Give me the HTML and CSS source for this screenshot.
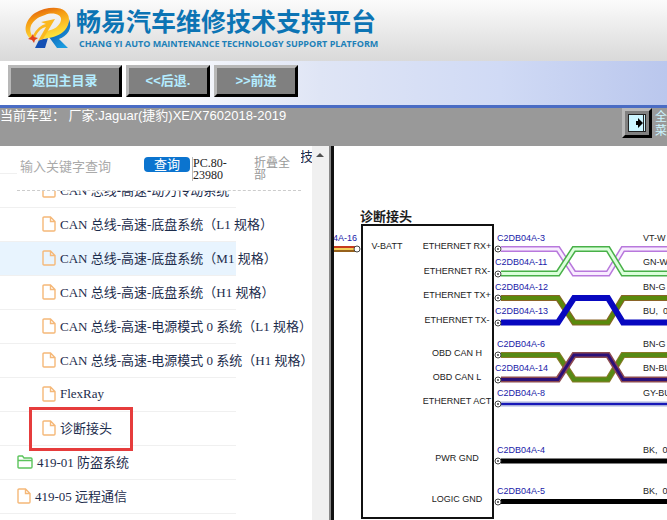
FILE: index.html
```
<!DOCTYPE html>
<html lang="zh-CN">
<head>
    <meta charset="UTF-8">
    <meta name="viewport" content="width=device-width, initial-scale=1.0">
    <title>畅易汽车维修技术支持平台</title>
    <link rel="stylesheet" href="styles.css">
</head>
<body>
    <header class="banner">
        <svg class="logo" width="46" height="42" viewBox="0 0 46 42">
            <defs>
                <linearGradient id="swoosh" x1="0" y1="0" x2="0.4" y2="1">
                    <stop offset="0" stop-color="#d9480f"/>
                    <stop offset="0.4" stop-color="#f59a12"/>
                    <stop offset="1" stop-color="#ffe23a"/>
                </linearGradient>
                <linearGradient id="leg" x1="0" y1="0" x2="0.6" y2="1">
                    <stop offset="0" stop-color="#0b3f9c"/>
                    <stop offset="1" stop-color="#1a9ce0"/>
                </linearGradient>
            </defs>
            <path d="M14 33 L23 31 L20 41 L10 41 Z" fill="#1450b4"/>
            <path d="M24 30 C36 28 43 21 44 12 C48 22 42 29 34 32 L43 41 L32 41 Z" fill="url(#leg)"/>
            <path d="M6 32 C-3 25 0 13 10 6 C20 0 34 -1 40 4 C47 10 44 20 38 25 C33 29 26 31 17 32 L21 24 C29 23 35 19 36 13 C37 7 27 5 20 8 C9 11 1 20 8 30 Z" fill="url(#swoosh)"/>
            <path d="M8 29 C11 22 16 18 21 17 L16 15 L30 12 L18 32 L13 34 L21 20 C16 21 12 25 10 31 Z" fill="#fbb81e"/>
            <path d="M8 27 L9 30 L13 31 L10 33 L9 36 L7 33 L3 32 L6 30 Z" fill="#e2431e"/>
        </svg>
        <div class="brand">
            <h1 class="brand-name">畅易汽车维修技术支持平台</h1>
            <div class="brand-sub">CHANG YI AUTO MAINTENANCE TECHNOLOGY SUPPORT PLATFORM</div>
        </div>
    </header>

    <nav class="toolbar">
        <button class="btn btn-wide" type="button">返回主目录</button>
        <button class="btn" type="button">&lt;&lt;后退.</button>
        <button class="btn" type="button">&gt;&gt;前进</button>
    </nav>

    <div class="infobar">
        <div class="model">当前车型： 厂家:Jaguar(捷豹)XE/X7602018-2019</div>
        <button class="btn-menu" type="button" id="menuBtn" aria-labelledby="menuText">
            <svg width="18" height="18" viewBox="0 0 18 18">
                <rect x="0.5" y="0.5" width="17" height="17" fill="#ccf5ff" stroke="#222"/>
                <path d="M15.5 1 V17" stroke="#222"/>
                <path d="M8 7 H10 V4 L15 9 L10 14 V11 H8 Z" fill="#000"/>
            </svg>
        </button>
        <label class="menu-text" id="menuText" for="menuBtn">全菜</label>
    </div>

    <div class="main">
        <aside class="sidebar">
            <form class="search">
                <input class="search-input" type="text" placeholder="输入关键字查询" aria-label="输入关键字查询">
                <button class="btn-search" type="button">查询</button>
                <span class="version">PC.80-23980</span>
                <a class="collapse" href="#">折叠全部</a>
            </form>
            <ul class="tree">
                <li class="node node-first">技</li>
                <li class="node level-3"><svg class="icon"><use href="#file"/></svg>CAN 总线-高速-动力传动系统</li>
                <li class="node level-3"><svg class="icon"><use href="#file"/></svg>CAN 总线-高速-底盘系统（L1 规格）</li>
                <li class="node level-3 active"><svg class="icon"><use href="#file"/></svg>CAN 总线-高速-底盘系统（M1 规格）</li>
                <li class="node level-3"><svg class="icon"><use href="#file"/></svg>CAN 总线-高速-底盘系统（H1 规格）</li>
                <li class="node level-3"><svg class="icon"><use href="#file"/></svg>CAN 总线-高速-电源模式 0 系统（L1 规格）</li>
                <li class="node level-3"><svg class="icon"><use href="#file"/></svg>CAN 总线-高速-电源模式 0 系统（H1 规格）</li>
                <li class="node level-3"><svg class="icon"><use href="#file"/></svg>FlexRay</li>
                <li class="node level-3 marked"><svg class="icon"><use href="#file"/></svg>诊断接头</li>
                <li class="node level-2"><svg class="icon icon-folder"><use href="#folder"/></svg>419-01 防盗系统</li>
                <li class="node level-2"><svg class="icon"><use href="#file"/></svg>419-05 远程通信</li>
            </ul>
        </aside>
        <div class="scrollbar"><span class="scroll-up"></span></div>

        <div class="diagram">
            <svg width="333" height="374" viewBox="334 146 333 374">
                <!-- battery feed -->
                <g fill="none">
                    <path d="M334 247 H355" stroke="#c63a1c" stroke-width="2"/>
                    <path d="M334 249 H355" stroke="#f3d05a" stroke-width="2"/>
                    <path d="M334 251 H355" stroke="#96611c" stroke-width="2"/>
                </g>

                <!-- connector -->
                <rect x="362" y="225" width="131" height="293" fill="#fff" stroke="#111" stroke-width="2"/>
                <text class="heading" x="360" y="221">诊断接头</text>

                <!-- twisted pairs -->
                <g fill="none">
                    <path d="M501 249 H558 L574 273.5 H608 L623 249 H667" stroke="#b878dc" stroke-width="6"/>
                    <path d="M501 249 H558 L574 273.5 H608 L623 249 H667" stroke="#f8ecff" stroke-width="3"/>
                    <path d="M501 273.5 H558 L574 249 H608 L623 273.5 H667" stroke="#48b048" stroke-width="6"/>
                    <path d="M501 273.5 H558 L574 249 H608 L623 273.5 H667" stroke="#dcffdc" stroke-width="3"/>

                    <path d="M501 298 H558 L574 322.5 H608 L623 298 H667" stroke="#8a6428" stroke-width="6"/>
                    <path d="M501 298 H558 L574 322.5 H608 L623 298 H667" stroke="#5a8a0c" stroke-width="4"/>
                    <path d="M501 322.5 H558 L574 298 H608 L623 322.5 H667" stroke="#0808c0" stroke-width="6"/>

                    <path d="M501 355 H558 L574 379.5 H608 L623 355 H667" stroke="#8a7a28" stroke-width="6"/>
                    <path d="M501 355 H558 L574 379.5 H608 L623 355 H667" stroke="#568a14" stroke-width="4"/>
                    <path d="M501 379.5 H558 L574 355 H608 L623 379.5 H667" stroke="#8c4a50" stroke-width="6"/>
                    <path d="M501 379.5 H558 L574 355 H608 L623 379.5 H667" stroke="#2c1078" stroke-width="3"/>

                    <path d="M501 404 H667" stroke="#a9b0dc" stroke-width="5"/>
                    <path d="M501 404 H667" stroke="#1818b8" stroke-width="2"/>
                    <path d="M501 461 H667 M501 501.5 H667" stroke="#000" stroke-width="5"/>
                </g>

                <g class="pins">
                    <circle cx="357" cy="249" r="3"/>
                    <circle cx="498" cy="249" r="3"/>
                    <circle cx="498" cy="274" r="3"/>
                    <circle cx="498" cy="298" r="3"/>
                    <circle cx="498" cy="323" r="3"/>
                    <circle cx="498" cy="355" r="3"/>
                    <circle cx="498" cy="380" r="3"/>
                    <circle cx="498" cy="404" r="3"/>
                    <circle cx="498" cy="461" r="3"/>
                    <circle cx="498" cy="502" r="3"/>
                </g>
                <g class="pin-dots">
                    <circle cx="498" cy="249" r="1"/>
                    <circle cx="498" cy="274" r="1"/>
                    <circle cx="498" cy="298" r="1"/>
                    <circle cx="498" cy="323" r="1"/>
                    <circle cx="498" cy="355" r="1"/>
                    <circle cx="498" cy="380" r="1"/>
                    <circle cx="498" cy="404" r="1"/>
                    <circle cx="498" cy="461" r="1"/>
                    <circle cx="498" cy="502" r="1"/>
                </g>

                <g class="signal">
                    <text x="387" y="249">V-BATT</text>
                    <text x="457" y="249">ETHERNET RX+</text>
                    <text x="457" y="274">ETHERNET RX-</text>
                    <text x="457" y="298">ETHERNET TX+</text>
                    <text x="457" y="323">ETHERNET TX-</text>
                    <text x="457" y="356">OBD CAN H</text>
                    <text x="457" y="380">OBD CAN L</text>
                    <text x="457" y="404">ETHERNET ACT</text>
                    <text x="457" y="461">PWR GND</text>
                    <text x="457" y="502">LOGIC GND</text>
                </g>

                <g class="pin-name">
                    <text x="333" y="241">4A-16</text>
                    <text x="497" y="241">C2DB04A-3</text>
                    <text x="495" y="265">C2DB04A-11</text>
                    <text x="495" y="290">C2DB04A-12</text>
                    <text x="495" y="314">C2DB04A-13</text>
                    <text x="497" y="347">C2DB04A-6</text>
                    <text x="495" y="371">C2DB04A-14</text>
                    <text x="497" y="396">C2DB04A-8</text>
                    <text x="497" y="453">C2DB04A-4</text>
                    <text x="497" y="494">C2DB04A-5</text>
                </g>

                <g class="wire-name">
                    <text x="643" y="241">VT-W</text>
                    <text x="643" y="265">GN-W</text>
                    <text x="643" y="290">BN-G</text>
                    <text x="643" y="314">BU,&#160; 0</text>
                    <text x="643" y="347">BN-G</text>
                    <text x="643" y="371">BN-BU</text>
                    <text x="643" y="396">GY-BU</text>
                    <text x="643" y="453">BK,&#160; 0</text>
                    <text x="643" y="494">BK,&#160; 0</text>
                </g>
            </svg>
        </div>
    </div>

    <svg class="sprite">
        <symbol id="file" viewBox="0 0 14 16">
            <path d="M2 1 H8.5 L13 5.5 V14 Q13 15 12 15 H2 Q1 15 1 14 V2 Q1 1 2 1 Z M8.5 1 V5.5 H13" fill="none" stroke="#f5b878" stroke-width="1.4"/>
        </symbol>
        <symbol id="folder" viewBox="0 0 16 14">
            <path d="M1 12 V2 Q1 1 2 1 H5.5 L7 3 H14 Q15 3 15 4 V12 Q15 13 14 13 H2 Q1 13 1 12 Z M1 5.5 H15" fill="none" stroke="#5cc45c" stroke-width="1.4"/>
        </symbol>
    </svg>
</body>
</html>
```
FILE: styles.css
```
* {
    margin: 0;
    padding: 0;
    box-sizing: border-box;
}

body {
    display: flex;
    flex-direction: column;
    height: 100vh;
    overflow: hidden;
    background: #fff;
    font-family: "Liberation Sans", "Noto Sans CJK SC", sans-serif;
    font-size: 13px;
}

.banner {
    display: flex;
    gap: 5px;
    height: 61px;
    padding: 7px 0 0 25px;
    background: linear-gradient(to bottom, #fbfbfb 0%, #d9d9d9 100%);
}

.logo {
    flex: none;
    overflow: visible;
}

.brand-name {
    font-size: 25px;
    font-weight: bold;
    line-height: 30px;
    color: #0c74b4;
}

.brand-sub {
    padding-left: 3px;
    font-family: "Open Sans", "Liberation Sans", sans-serif;
    font-size: 9px;
    font-weight: bold;
    line-height: 13px;
    color: #2080b8;
}

.toolbar {
    display: flex;
    gap: 4px;
    height: 47px;
    padding: 4px 8px;
    border-bottom: 3px solid #4a6cc4;
    background: linear-gradient(to right, #fff 0%, #fff 20%, #dfe5f5 48%, #d0daf5 75%, #bac7ed 100%);
}

.btn {
    width: 84px;
    height: 32px;
    padding-bottom: 4px;
    border: 3px solid;
    border-color: #b8b8b8 #000 #000 #b8b8b8;
    background: #808080;
    color: #b4ecff;
    font-family: "Liberation Sans", "Noto Sans CJK SC", sans-serif;
    font-size: 13px;
    font-weight: bold;
    cursor: pointer;
}

.btn-wide {
    width: 114px;
}

.infobar {
    display: flex;
    align-items: flex-start;
    height: 38px;
    background: #999;
    color: #fff;
}

.model {
    flex: 1;
    line-height: 15px;
}

.btn-menu {
    display: flex;
    align-items: center;
    justify-content: center;
    width: 30px;
    height: 30px;
    margin-right: 3px;
    border: 3px solid;
    border-color: #b8b8b8 #000 #000 #b8b8b8;
    background: #808080;
    cursor: pointer;
}

.btn-menu svg {
    flex: none;
}

.menu-text {
    width: 12px;
    padding-top: 2px;
    font-size: 12px;
    line-height: 14px;
    color: #ccf5ff;
}

.main {
    display: flex;
    flex: 1;
    min-height: 0;
}

.sidebar {
    position: relative;
    width: 312px;
    overflow: hidden;
    font-family: "Liberation Serif", "Noto Sans CJK SC", serif;
}

.search {
    position: absolute;
    top: 0;
    left: 17px;
    display: flex;
    align-items: flex-start;
    width: 284px;
    height: 45px;
    padding: 11px 0 0 3px;
    border-bottom: 1px dashed #ccc;
    background: #fff;
}

.search-input {
    width: 124px;
    height: 18px;
    border: none;
    outline: none;
    background: none;
    font-family: "Liberation Sans", "Noto Sans CJK SC", sans-serif;
    font-size: 13px;
}

.search-input::placeholder {
    color: #aaa;
}

.btn-search {
    width: 46px;
    height: 15px;
    margin-right: 2px;
    border: none;
    border-radius: 4px;
    background: #0b74cf;
    color: #fff;
    font-family: "Liberation Sans", "Noto Sans CJK SC", sans-serif;
    font-size: 13px;
    line-height: 15px;
    cursor: pointer;
}

.version {
    width: 62px;
    padding-right: 20px;
    border-left: 1px solid #bbb;
    font-size: 12px;
    line-height: 12px;
    color: #222;
}

.collapse {
    width: 36px;
    font-size: 12px;
    line-height: 12px;
    color: #999;
    text-decoration: none;
}

.tree {
    list-style: none;
}

.node {
    display: flex;
    align-items: center;
    gap: 4px;
    width: 236px;
    height: 34px;
    padding-bottom: 2px;
    border-bottom: 1px solid #f0f0f0;
    white-space: nowrap;
    color: #1c2c4c;
}

/* scrolled half out, only the tail of its text shows */
.node-first {
    height: 28px;
    padding: 0 0 8px 300px;
}

.level-2 {
    padding-left: 17px;
}

.level-3 {
    padding-left: 42px;
}

.active {
    background: #e8f4fe;
}

.marked {
    position: relative;
}

.marked::after {
    content: "";
    position: absolute;
    top: -5px;
    left: 29px;
    box-sizing: border-box;
    width: 104px;
    height: 44px;
    border: 3px solid #e63c3c;
}

.icon {
    flex: none;
    width: 14px;
    height: 16px;
}

.icon-folder {
    width: 16px;
    height: 14px;
}

.scrollbar {
    width: 17px;
    padding: 7px 4px;
    background: #f0f0f0;
}

.scroll-up {
    display: block;
    width: 8px;
    border: 4px solid transparent;
    border-top: none;
    border-bottom: 4px solid #505050;
}

.diagram {
    flex: 1;
    min-width: 0;
    overflow: hidden;
    border-left: 3px solid #111;
    box-shadow: -2px 0 0 #888;
    margin-left: 2px;
}

.diagram svg {
    display: block;
}

.diagram text {
    font-size: 9px;
    fill: #1c1c1c;
}

.diagram .heading {
    font-size: 13px;
    font-weight: bold;
}

.diagram .pin-name text {
    fill: #2020a8;
}

.signal {
    text-anchor: middle;
}

.pins {
    fill: #fff;
    stroke: #444;
    stroke-width: 1;
}

.pin-dots {
    fill: #444;
}

.sprite {
    position: absolute;
    width: 0;
    height: 0;
}
```
